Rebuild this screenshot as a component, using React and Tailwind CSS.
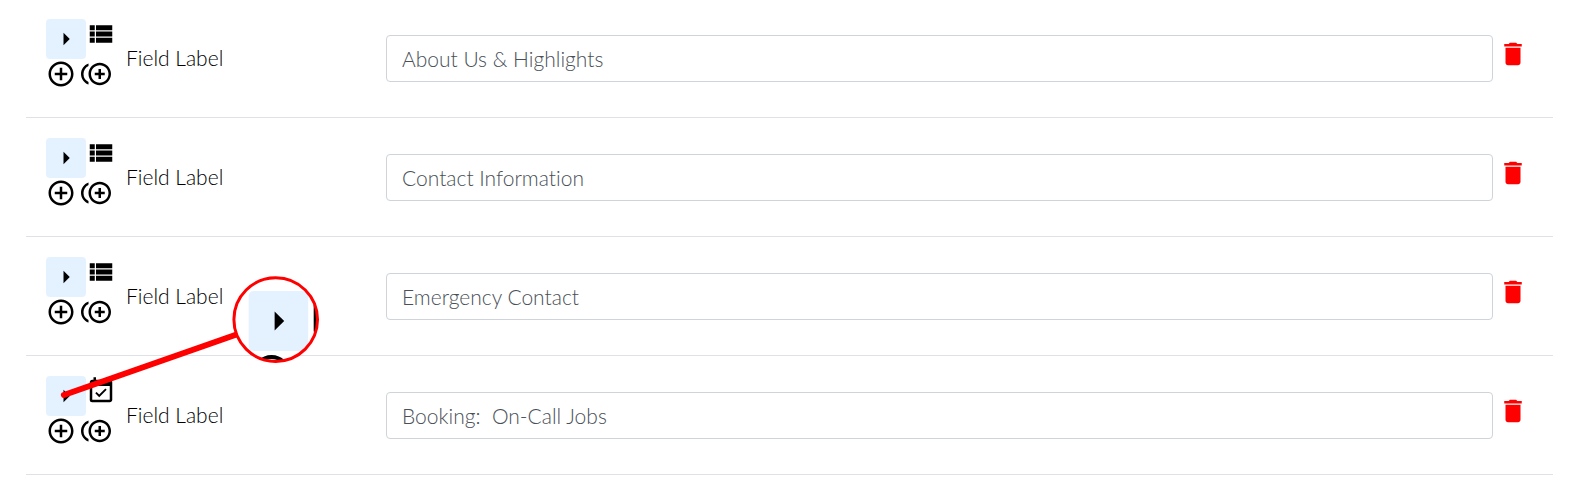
import { useState } from 'react';
import {
  MdAddCircleOutline,
  MdArrowRight,
  MdControlPointDuplicate,
  MdDelete,
  MdEventAvailable,
  MdViewList,
} from 'react-icons/md';

const INITIAL_FIELDS = [
  { id: 'about', value: 'About Us & Highlights', type: 'section' },
  { id: 'contact', value: 'Contact Information', type: 'section' },
  { id: 'emergency', value: 'Emergency Contact', type: 'section' },
  { id: 'booking', value: 'Booking:  On-Call Jobs', type: 'booking' },
];

const FieldRow = ({ field, onChange, onDelete }) => {
  const TypeIcon = field.type === 'booking' ? MdEventAvailable : MdViewList;

  return (
    <li className="flex items-center border-b border-[#dee2e6] py-5 pl-5 pr-[25px]">
      <div className="w-20 shrink-0 pb-2">
        <div className="flex items-start">
          <button type="button" aria-label="Expand" className="rounded bg-[#e4f2ff] p-[5px]">
            <MdArrowRight size={30} />
          </button>
          <TypeIcon size={30} />
        </div>
        <div className="flex gap-[5px]">
          <button type="button" aria-label="Add field">
            <MdAddCircleOutline size={30} />
          </button>
          <button type="button" aria-label="Duplicate field">
            <MdControlPointDuplicate size={30} />
          </button>
        </div>
      </div>

      <label htmlFor={field.id} className="w-[260px] shrink-0">
        Field Label
      </label>
      <input
        id={field.id}
        type="text"
        value={field.value}
        onChange={(e) => onChange(field.id, e.target.value)}
        className="h-[47px] min-w-0 flex-1 rounded border border-[#ced4da] px-[15px] text-[#495057]"
      />
      <button
        type="button"
        aria-label="Delete field"
        onClick={() => onDelete(field.id)}
        className="ml-[5px] pb-2 text-[#ff0000]"
      >
        <MdDelete size={30} />
      </button>
    </li>
  );
};

// Magnified view of the expand arrow, with a pointer to the real one
const Callout = () => (
  <svg
    viewBox="0 0 270 130"
    width="270"
    height="130"
    className="pointer-events-none absolute left-[55px] top-[273px]"
    aria-hidden="true"
  >
    <defs>
      <clipPath id="lens">
        <circle cx="220.7" cy="47.6" r="42" />
      </clipPath>
    </defs>
    <path d="M8.9 123 183 62" stroke="#ff0000" strokeWidth="6" strokeLinecap="round" />
    <g clipPath="url(#lens)">
      <rect x="178" y="5" width="86" height="86" fill="#fff" />
      <rect x="193.7" y="19" width="59.5" height="60" rx="5" fill="#e4f2ff" />
      <path d="M219.6 39.5v19l9.6-9.5z" />
      <circle cx="216.5" cy="102" r="17" fill="none" stroke="#000" strokeWidth="3.8" />
      <rect x="258.7" y="31" width="5" height="30" rx="2" />
    </g>
    <circle cx="220.7" cy="47.6" r="41.8" fill="none" stroke="#ff0000" strokeWidth="3" />
  </svg>
);

const App = () => {
  const [fields, setFields] = useState(INITIAL_FIELDS);

  const handleChange = (id, value) => {
    setFields(fields.map((field) => (field.id === id ? { ...field, value } : field)));
  };

  const handleDelete = (id) => {
    setFields(fields.filter((field) => field.id !== id));
  };

  return (
    <main className="relative bg-white pl-[26px] pr-[43px] font-['Lato',sans-serif] text-[21px] leading-7 font-light text-black [font-variant-ligatures:none]">
      <ul className="-mt-px">
        {fields.map((field) => (
          <FieldRow key={field.id} field={field} onChange={handleChange} onDelete={handleDelete} />
        ))}
      </ul>
      <Callout />
    </main>
  );
};

export default App;
